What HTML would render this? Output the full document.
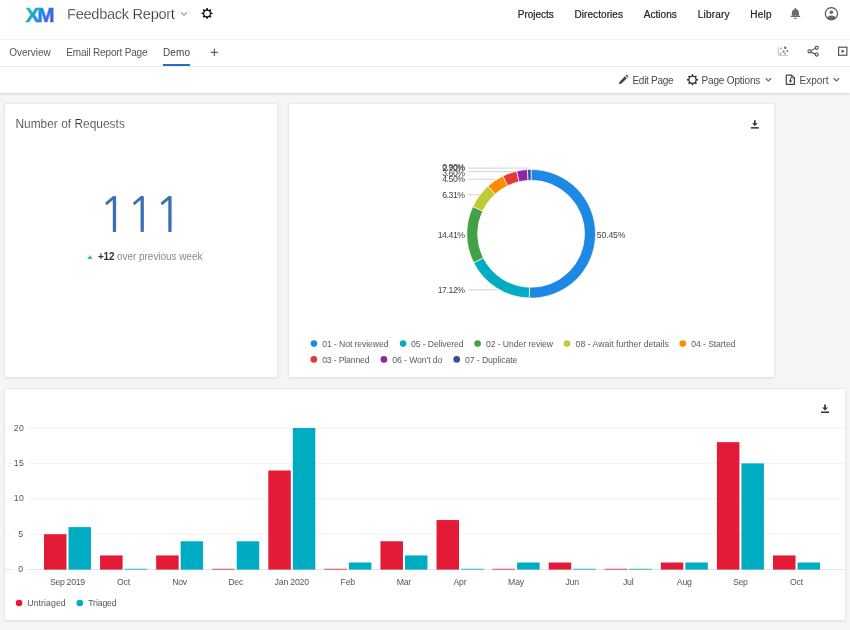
<!DOCTYPE html>
<html><head><meta charset="utf-8"><title>Feedback Report</title>
<style>
html,body{margin:0;padding:0}
body{width:850px;height:630px;overflow:hidden;position:relative;background:#f5f5f5;font-family:"Liberation Sans", sans-serif}
.t{position:absolute;white-space:pre;}
.abs{position:absolute}
.card{position:absolute;background:#fff;box-shadow:0 0 0 0.5px #e4e4e4,0 1px 3px rgba(0,0,0,.10)}
#hdr{position:absolute;left:0;top:0;width:850px;height:39px;background:#fff;border-bottom:1px solid #f3f3f3}
#tabs{position:absolute;left:0;top:40px;width:850px;height:25.5px;background:#fff;border-bottom:1px solid #ebebeb}
#tool{position:absolute;left:0;top:66.5px;width:850px;height:26.5px;background:#fff;box-shadow:0 1px 2px rgba(0,0,0,.14)}
#big{position:absolute;left:98.4px;top:191.8px;font-family:"NanumGothic","Liberation Sans",sans-serif;font-size:47.7px;line-height:47.7px;color:#3b6fb3;letter-spacing:-1.1px;}
svg{position:absolute;left:0;top:0}
#txt{position:absolute;left:0;top:0;width:850px;height:630px;will-change:transform}
</style></head><body>
<div id="hdr"></div><div id="tabs"></div><div id="tool"></div>
<div class="abs" style="left:163.4px;top:63.6px;width:26.4px;height:2px;background:#2470c2"></div>
<div class="card" style="left:4.5px;top:104.3px;width:272.4px;height:272.8px"></div>
<div class="card" style="left:288.6px;top:104.3px;width:485.7px;height:272.8px"></div>
<div class="card" style="left:4.5px;top:388.7px;width:840px;height:231.5px"></div>
<svg width="850" height="630" viewBox="0 0 850 630">
<rect x="5" y="569.10" width="839.5" height="1" fill="#e4e4e4"/><rect x="5" y="533.70" width="839.5" height="1" fill="#f2f2f2"/><rect x="5" y="498.30" width="839.5" height="1" fill="#f2f2f2"/><rect x="5" y="462.90" width="839.5" height="1" fill="#f2f2f2"/><rect x="5" y="427.50" width="839.5" height="1" fill="#f2f2f2"/><rect x="12" y="564.60" width="16" height="10" fill="#fff"/><rect x="12" y="529.20" width="16" height="10" fill="#fff"/><rect x="12" y="493.80" width="16" height="10" fill="#fff"/><rect x="12" y="458.40" width="16" height="10" fill="#fff"/><rect x="12" y="423.00" width="16" height="10" fill="#fff"/>
<rect x="44.00" y="534.20" width="22.5" height="35.40" fill="#e31b37"/><rect x="68.50" y="527.12" width="22.5" height="42.48" fill="#00acc1"/><rect x="100.08" y="555.44" width="22.5" height="14.16" fill="#e31b37"/><rect x="124.58" y="568.80" width="22.5" height="0.80" fill="#00acc1"/><rect x="156.15" y="555.44" width="22.5" height="14.16" fill="#e31b37"/><rect x="180.65" y="541.28" width="22.5" height="28.32" fill="#00acc1"/><rect x="212.23" y="568.80" width="22.5" height="0.80" fill="#e31b37"/><rect x="236.73" y="541.28" width="22.5" height="28.32" fill="#00acc1"/><rect x="268.31" y="470.48" width="22.5" height="99.12" fill="#e31b37"/><rect x="292.81" y="428.00" width="22.5" height="141.60" fill="#00acc1"/><rect x="324.38" y="568.80" width="22.5" height="0.80" fill="#e31b37"/><rect x="348.88" y="562.52" width="22.5" height="7.08" fill="#00acc1"/><rect x="380.46" y="541.28" width="22.5" height="28.32" fill="#e31b37"/><rect x="404.96" y="555.44" width="22.5" height="14.16" fill="#00acc1"/><rect x="436.54" y="520.04" width="22.5" height="49.56" fill="#e31b37"/><rect x="461.04" y="568.80" width="22.5" height="0.80" fill="#00acc1"/><rect x="492.62" y="568.80" width="22.5" height="0.80" fill="#e31b37"/><rect x="517.12" y="562.52" width="22.5" height="7.08" fill="#00acc1"/><rect x="548.69" y="562.52" width="22.5" height="7.08" fill="#e31b37"/><rect x="573.19" y="568.80" width="22.5" height="0.80" fill="#00acc1"/><rect x="604.77" y="568.80" width="22.5" height="0.80" fill="#e31b37"/><rect x="629.27" y="568.80" width="22.5" height="0.80" fill="#00acc1"/><rect x="660.85" y="562.52" width="22.5" height="7.08" fill="#e31b37"/><rect x="685.35" y="562.52" width="22.5" height="7.08" fill="#00acc1"/><rect x="716.92" y="442.16" width="22.5" height="127.44" fill="#e31b37"/><rect x="741.42" y="463.40" width="22.5" height="106.20" fill="#00acc1"/><rect x="773.00" y="555.44" width="22.5" height="14.16" fill="#e31b37"/><rect x="797.50" y="562.52" width="22.5" height="7.08" fill="#00acc1"/>
<path d="M468 168.1H529.6" fill="none" stroke="#c8c8c8" stroke-width="0.8"/><path d="M468 171.6H516" fill="none" stroke="#c8c8c8" stroke-width="0.8"/><path d="M468 179.3H496" fill="none" stroke="#c8c8c8" stroke-width="0.8"/><path d="M468 194.8H479.4L484 197.6" fill="none" stroke="#c8c8c8" stroke-width="0.8"/><path d="M465.5 234.6H468" fill="none" stroke="#c8c8c8" stroke-width="0.8"/><path d="M468 289.8H497.6" fill="none" stroke="#c8c8c8" stroke-width="0.8"/><path d="M594 234.6H597" fill="none" stroke="#c8c8c8" stroke-width="0.8"/>
<path d="M531.10 169.50A64.3 64.3 0 1 1 529.28 298.07L529.59 287.28A53.5 53.5 0 1 0 531.10 180.30Z" fill="#1e88e5" stroke="#fff" stroke-width="0.7" stroke-linejoin="round"/>
<path d="M529.28 298.07A64.3 64.3 0 0 1 473.68 262.75L483.33 257.89A53.5 53.5 0 0 0 529.59 287.28Z" fill="#00acc1" stroke="#fff" stroke-width="0.7" stroke-linejoin="round"/>
<path d="M473.68 262.75A64.3 64.3 0 0 1 472.89 206.49L482.67 211.08A53.5 53.5 0 0 0 483.33 257.89Z" fill="#43a047" stroke="#fff" stroke-width="0.7" stroke-linejoin="round"/>
<path d="M472.89 206.49A64.3 64.3 0 0 1 487.94 186.14L495.19 194.14A53.5 53.5 0 0 0 482.67 211.08Z" fill="#c0ca33" stroke="#fff" stroke-width="0.7" stroke-linejoin="round"/>
<path d="M487.94 186.14A64.3 64.3 0 0 1 502.97 175.98L507.69 185.69A53.5 53.5 0 0 0 495.19 194.14Z" fill="#fb8c00" stroke="#fff" stroke-width="0.7" stroke-linejoin="round"/>
<path d="M502.97 175.98A64.3 64.3 0 0 1 516.67 171.14L519.09 181.67A53.5 53.5 0 0 0 507.69 185.69Z" fill="#e53935" stroke="#fff" stroke-width="0.7" stroke-linejoin="round"/>
<path d="M516.67 171.14A64.3 64.3 0 0 1 527.46 169.60L528.07 180.39A53.5 53.5 0 0 0 519.09 181.67Z" fill="#8e24aa" stroke="#fff" stroke-width="0.7" stroke-linejoin="round"/>
<path d="M527.46 169.60A64.3 64.3 0 0 1 531.10 169.50L531.10 180.30A53.5 53.5 0 0 0 528.07 180.39Z" fill="#3949ab" stroke="#fff" stroke-width="0.7" stroke-linejoin="round"/>
<circle cx="313.9" cy="343.6" r="3.3" fill="#1e88e5"/><circle cx="403.1" cy="343.6" r="3.3" fill="#00acc1"/><circle cx="477.6" cy="343.6" r="3.3" fill="#43a047"/><circle cx="567.0" cy="343.6" r="3.3" fill="#c0ca33"/><circle cx="682.8" cy="343.6" r="3.3" fill="#fb8c00"/><circle cx="313.8" cy="359.4" r="3.3" fill="#e53935"/><circle cx="383.9" cy="359.4" r="3.3" fill="#8e24aa"/><circle cx="456.7" cy="359.4" r="3.3" fill="#3949ab"/><circle cx="19.1" cy="603" r="3.3" fill="#e31b37"/><circle cx="79.8" cy="603" r="3.3" fill="#00acc1"/>
<path d="M181.4 12.8L184.0 15.3L186.6 12.8" fill="none" stroke="#666" stroke-width="1.0" stroke-linecap="round" stroke-linejoin="round"/><path d="M206.09 9.41L206.36 7.94L207.74 7.94L208.01 9.41L209.19 9.90L210.42 9.05L211.40 10.03L210.55 11.26L211.04 12.44L212.51 12.71L212.51 14.09L211.04 14.36L210.55 15.54L211.40 16.77L210.42 17.75L209.19 16.90L208.01 17.39L207.74 18.86L206.36 18.86L206.09 17.39L204.91 16.90L203.68 17.75L202.70 16.77L203.55 15.54L203.06 14.36L201.59 14.09L201.59 12.71L203.06 12.44L203.55 11.26L202.70 10.03L203.68 9.05L204.91 9.90ZM204.30 13.40a2.75 2.75 0 1 0 5.5 0a2.75 2.75 0 1 0 -5.5 0Z" fill="#111" fill-rule="evenodd"/><path d="M210.6 52.3H218M214.3 48.6V56" stroke="#444" stroke-width="1" fill="none"/><path d="M795.4 8.1c0.5 0 0.85 0.35 0.85 0.85v0.35c1.7 0.45 2.7 1.9 2.7 3.75v2.8h-7.1v-2.8c0-1.85 1-3.3 2.7-3.75v-0.35c0-0.5 0.35-0.85 0.85-0.85z" fill="#6a6a6a"/><rect x="790.6" y="15.7" width="9.6" height="1.25" rx="0.3" fill="#6a6a6a"/><rect x="794.1" y="17.8" width="2.6" height="1.1" rx="0.5" fill="#6a6a6a"/><circle cx="831.4" cy="13.7" r="6.1" fill="none" stroke="#555" stroke-width="1.2"/><circle cx="831.4" cy="12.3" r="1.75" fill="#666"/><path d="M826.9 17.6c1-1.5 2.7-2.2 4.5-2.2s3.5 0.7 4.5 2.2a6 6 0 0 1 -9 0z" fill="#666"/><path d="M778.3 46.6V55.3H788.4" fill="none" stroke="#c2c2c2" stroke-width="1"/><circle cx="785.2" cy="47.7" r="1.2" fill="#6a6a6a"/><circle cx="781.0" cy="48.7" r="1.1" fill="#bdbdbd"/><circle cx="787.4" cy="51.1" r="1.1" fill="#8c8c8c"/><circle cx="783.5" cy="51.5" r="1.1" fill="#757575"/><circle cx="780.6" cy="53.6" r="1.0" fill="#a8a8a8"/><circle cx="785.0" cy="53.6" r="1.0" fill="#a0a0a0"/><g fill="none" stroke="#444" stroke-width="1.05"><path d="M810.8 50.6L815.3 48.4M810.8 52L815.3 54"/><circle cx="809.5" cy="51.3" r="1.55"/><circle cx="816.7" cy="47.8" r="1.55"/><circle cx="816.7" cy="54.6" r="1.55"/></g><rect x="838.6" y="47.2" width="8.3" height="8" fill="none" stroke="#444" stroke-width="1.1"/><path d="M841.6 49.5L844.5 51.2L841.6 52.9Z" fill="#444"/><path d="M618.9 84.3L619.6 81.7L625.0 76.3L626.9 78.2L621.5 83.6Z" fill="#444"/><path d="M625.7 75.6L626.3 75.0a0.6 0.6 0 0 1 0.9 0L628.2 76.0a0.6 0.6 0 0 1 0 0.9L627.6 77.5Z" fill="#444"/><path d="M691.52 75.72L691.80 74.24L693.20 74.24L693.48 75.72L694.69 76.22L695.93 75.38L696.92 76.37L696.08 77.61L696.58 78.82L698.06 79.10L698.06 80.50L696.58 80.78L696.08 81.99L696.92 83.23L695.93 84.22L694.69 83.38L693.48 83.88L693.20 85.36L691.80 85.36L691.52 83.88L690.31 83.38L689.07 84.22L688.08 83.23L688.92 81.99L688.42 80.78L686.94 80.50L686.94 79.10L688.42 78.82L688.92 77.61L688.08 76.37L689.07 75.38L690.31 76.22ZM689.55 79.80a2.95 2.95 0 1 0 5.9 0a2.95 2.95 0 1 0 -5.9 0Z" fill="#333" fill-rule="evenodd"/><path d="M766.0 78.5L768.4 81.0L770.8 78.5" fill="none" stroke="#6a6a6a" stroke-width="1.15" stroke-linecap="round" stroke-linejoin="round"/><path d="M834.0 78.5L836.4 81.0L838.8 78.5" fill="none" stroke="#6a6a6a" stroke-width="1.15" stroke-linecap="round" stroke-linejoin="round"/><path d="M786.3 75.1H791.6L794.4 77.9V84.3H786.3Z" fill="none" stroke="#444" stroke-width="1.2" stroke-linejoin="round"/><path d="M791.4 75.1V78.1H794.4" fill="none" stroke="#444" stroke-width="0.9"/><path d="M789.9 78.3H791.0V80.4H792.4L790.45 82.7L788.5 80.4H789.9Z" fill="#444"/><g transform="translate(754.85 120.2)" fill="#333"><rect x="-4" y="6.9" width="8" height="1.5"/><path d="M-0.85 0H0.85V3H2.9L0 5.9L-2.9 3H-0.85Z"/></g><g transform="translate(825.0500000000001 404.59999999999997)" fill="#333"><rect x="-4" y="6.9" width="8" height="1.5"/><path d="M-0.85 0H0.85V3H2.9L0 5.9L-2.9 3H-0.85Z"/></g><path d="M87.2 258.9L89.9 254.9L92.6 258.9Z" fill="#3dbdb5"/>
<defs><linearGradient id="xg" gradientUnits="userSpaceOnUse" x1="27" y1="7" x2="52" y2="22"><stop offset="0" stop-color="#22c9a6"/><stop offset="0.5" stop-color="#1a8fe8"/><stop offset="1" stop-color="#4b50dc"/></linearGradient></defs>
<text x="25.4" y="21.9" font-family='"Liberation Sans", sans-serif' font-weight="700" font-size="20.6" letter-spacing="-1.8" fill="url(#xg)" stroke="url(#xg)" stroke-width="0.5">XM</text>
</svg>
<div id="txt">
<div id="big">111</div>
<span class="t" style="left:67.07px;top:7.09px;font-size:14.6px;line-height:14.6px;letter-spacing:-0.292px;color:#2a2a2a;font-weight:400;-webkit-text-stroke:0.25px #fff;">Feedback Report</span>
<span class="t" style="left:517.80px;top:9.98px;font-size:10.0px;line-height:10.0px;letter-spacing:-0.032px;color:#222;font-weight:400;-webkit-text-stroke:0.2px #222;">Projects</span>
<span class="t" style="left:574.50px;top:9.98px;font-size:10.0px;line-height:10.0px;letter-spacing:0.070px;color:#222;font-weight:400;-webkit-text-stroke:0.2px #222;">Directories</span>
<span class="t" style="left:643.70px;top:9.98px;font-size:10.0px;line-height:10.0px;letter-spacing:0.051px;color:#222;font-weight:400;-webkit-text-stroke:0.2px #222;">Actions</span>
<span class="t" style="left:697.80px;top:9.98px;font-size:10.0px;line-height:10.0px;letter-spacing:0.187px;color:#222;font-weight:400;-webkit-text-stroke:0.2px #222;">Library</span>
<span class="t" style="left:750.20px;top:9.98px;font-size:10.0px;line-height:10.0px;letter-spacing:0.241px;color:#222;font-weight:400;-webkit-text-stroke:0.2px #222;">Help</span>
<span class="t" style="left:9.30px;top:47.98px;font-size:10.0px;line-height:10.0px;letter-spacing:-0.027px;color:#555;font-weight:400;">Overview</span>
<span class="t" style="left:66.30px;top:47.98px;font-size:10.0px;line-height:10.0px;letter-spacing:-0.171px;color:#555;font-weight:400;">Email Report Page</span>
<span class="t" style="left:162.90px;top:47.98px;font-size:10.0px;line-height:10.0px;letter-spacing:0.204px;color:#444;font-weight:400;">Demo</span>
<span class="t" style="left:632.50px;top:75.98px;font-size:10.0px;line-height:10.0px;letter-spacing:-0.297px;color:#4a4a4a;font-weight:400;">Edit Page</span>
<span class="t" style="left:701.50px;top:75.98px;font-size:10.0px;line-height:10.0px;letter-spacing:-0.164px;color:#4a4a4a;font-weight:400;">Page Options</span>
<span class="t" style="left:799.50px;top:75.98px;font-size:10.0px;line-height:10.0px;letter-spacing:0.019px;color:#4a4a4a;font-weight:400;">Export</span>
<span class="t" style="left:15.40px;top:119.38px;font-size:11.9px;line-height:11.9px;letter-spacing:0.025px;color:#333;font-weight:400;-webkit-text-stroke:0.18px #fff;">Number of Requests</span>
<span class="t" style="left:97.90px;top:251.98px;font-size:10.0px;line-height:10.0px;letter-spacing:-0.134px;color:#333;font-weight:700;">+12</span>
<span class="t" style="left:117.10px;top:251.98px;font-size:10.0px;line-height:10.0px;letter-spacing:-0.050px;color:#8a8a8a;font-weight:400;">over previous week</span>
<span class="t" style="left:442.26px;top:163.09px;font-size:8.7px;line-height:8.7px;letter-spacing:-0.468px;color:#444;font-weight:400;">0.90%</span>
<span class="t" style="left:442.26px;top:164.09px;font-size:8.7px;line-height:8.7px;letter-spacing:-0.468px;color:#444;font-weight:400;">2.70%</span>
<span class="t" style="left:442.26px;top:169.09px;font-size:8.7px;line-height:8.7px;letter-spacing:-0.468px;color:#444;font-weight:400;">3.60%</span>
<span class="t" style="left:442.26px;top:175.09px;font-size:8.7px;line-height:8.7px;letter-spacing:-0.468px;color:#444;font-weight:400;">4.50%</span>
<span class="t" style="left:442.26px;top:191.09px;font-size:8.7px;line-height:8.7px;letter-spacing:-0.468px;color:#444;font-weight:400;">6.31%</span>
<span class="t" style="left:437.67px;top:231.09px;font-size:8.7px;line-height:8.7px;letter-spacing:-0.420px;color:#444;font-weight:400;">14.41%</span>
<span class="t" style="left:437.67px;top:286.09px;font-size:8.7px;line-height:8.7px;letter-spacing:-0.420px;color:#444;font-weight:400;">17.12%</span>
<span class="t" style="left:596.87px;top:231.09px;font-size:8.7px;line-height:8.7px;letter-spacing:-0.180px;color:#444;font-weight:400;">50.45%</span>
<span class="t" style="left:322.17px;top:340.09px;font-size:8.7px;line-height:8.7px;letter-spacing:-0.108px;color:#5c5c5c;font-weight:400;">01 - Not reviewed</span>
<span class="t" style="left:411.06px;top:340.09px;font-size:8.7px;line-height:8.7px;letter-spacing:-0.117px;color:#5c5c5c;font-weight:400;">05 - Delivered</span>
<span class="t" style="left:485.96px;top:340.09px;font-size:8.7px;line-height:8.7px;letter-spacing:-0.094px;color:#5c5c5c;font-weight:400;">02 - Under review</span>
<span class="t" style="left:575.57px;top:340.09px;font-size:8.7px;line-height:8.7px;letter-spacing:0.009px;color:#5c5c5c;font-weight:400;">08 - Await further details</span>
<span class="t" style="left:691.37px;top:340.09px;font-size:8.7px;line-height:8.7px;letter-spacing:-0.121px;color:#5c5c5c;font-weight:400;">04 - Started</span>
<span class="t" style="left:322.17px;top:356.09px;font-size:8.7px;line-height:8.7px;letter-spacing:-0.165px;color:#5c5c5c;font-weight:400;">03 - Planned</span>
<span class="t" style="left:392.17px;top:356.09px;font-size:8.7px;line-height:8.7px;letter-spacing:-0.082px;color:#5c5c5c;font-weight:400;">06 - Won't do</span>
<span class="t" style="left:465.06px;top:356.09px;font-size:8.7px;line-height:8.7px;letter-spacing:-0.103px;color:#5c5c5c;font-weight:400;">07 - Duplicate</span>
<span class="t" style="left:18.17px;top:565.09px;font-size:8.7px;line-height:8.7px;letter-spacing:0.000px;color:#555;font-weight:400;">0</span>
<span class="t" style="left:18.17px;top:530.09px;font-size:8.7px;line-height:8.7px;letter-spacing:0.000px;color:#555;font-weight:400;">5</span>
<span class="t" style="left:13.87px;top:494.09px;font-size:8.7px;line-height:8.7px;letter-spacing:0.198px;color:#555;font-weight:400;">10</span>
<span class="t" style="left:13.87px;top:459.09px;font-size:8.7px;line-height:8.7px;letter-spacing:0.198px;color:#555;font-weight:400;">15</span>
<span class="t" style="left:13.87px;top:424.09px;font-size:8.7px;line-height:8.7px;letter-spacing:0.198px;color:#555;font-weight:400;">20</span>
<span class="t" style="left:49.96px;top:578.09px;font-size:8.7px;line-height:8.7px;letter-spacing:-0.305px;color:#555;font-weight:400;">Sep 2019</span>
<span class="t" style="left:117.02px;top:578.09px;font-size:8.7px;line-height:8.7px;letter-spacing:-0.200px;color:#555;font-weight:400;">Oct</span>
<span class="t" style="left:172.13px;top:578.09px;font-size:8.7px;line-height:8.7px;letter-spacing:-0.200px;color:#555;font-weight:400;">Nov</span>
<span class="t" style="left:228.20px;top:578.09px;font-size:8.7px;line-height:8.7px;letter-spacing:-0.200px;color:#555;font-weight:400;">Dec</span>
<span class="t" style="left:274.62px;top:578.09px;font-size:8.7px;line-height:8.7px;letter-spacing:-0.197px;color:#555;font-weight:400;">Jan 2020</span>
<span class="t" style="left:340.59px;top:578.09px;font-size:8.7px;line-height:8.7px;letter-spacing:-0.200px;color:#555;font-weight:400;">Feb</span>
<span class="t" style="left:396.68px;top:578.09px;font-size:8.7px;line-height:8.7px;letter-spacing:-0.200px;color:#555;font-weight:400;">Mar</span>
<span class="t" style="left:453.47px;top:578.09px;font-size:8.7px;line-height:8.7px;letter-spacing:-0.200px;color:#555;font-weight:400;">Apr</span>
<span class="t" style="left:508.10px;top:578.09px;font-size:8.7px;line-height:8.7px;letter-spacing:-0.200px;color:#555;font-weight:400;">May</span>
<span class="t" style="left:565.38px;top:578.09px;font-size:8.7px;line-height:8.7px;letter-spacing:-0.200px;color:#555;font-weight:400;">Jun</span>
<span class="t" style="left:622.91px;top:578.09px;font-size:8.7px;line-height:8.7px;letter-spacing:-0.200px;color:#555;font-weight:400;">Jul</span>
<span class="t" style="left:676.81px;top:578.09px;font-size:8.7px;line-height:8.7px;letter-spacing:-0.200px;color:#555;font-weight:400;">Aug</span>
<span class="t" style="left:732.89px;top:578.09px;font-size:8.7px;line-height:8.7px;letter-spacing:-0.200px;color:#555;font-weight:400;">Sep</span>
<span class="t" style="left:789.94px;top:578.09px;font-size:8.7px;line-height:8.7px;letter-spacing:-0.200px;color:#555;font-weight:400;">Oct</span>
<span class="t" style="left:27.37px;top:599.09px;font-size:8.7px;line-height:8.7px;letter-spacing:0.075px;color:#555;font-weight:400;">Untriaged</span>
<span class="t" style="left:88.27px;top:599.09px;font-size:8.7px;line-height:8.7px;letter-spacing:-0.128px;color:#555;font-weight:400;">Triaged</span>
</div>
</body></html>
